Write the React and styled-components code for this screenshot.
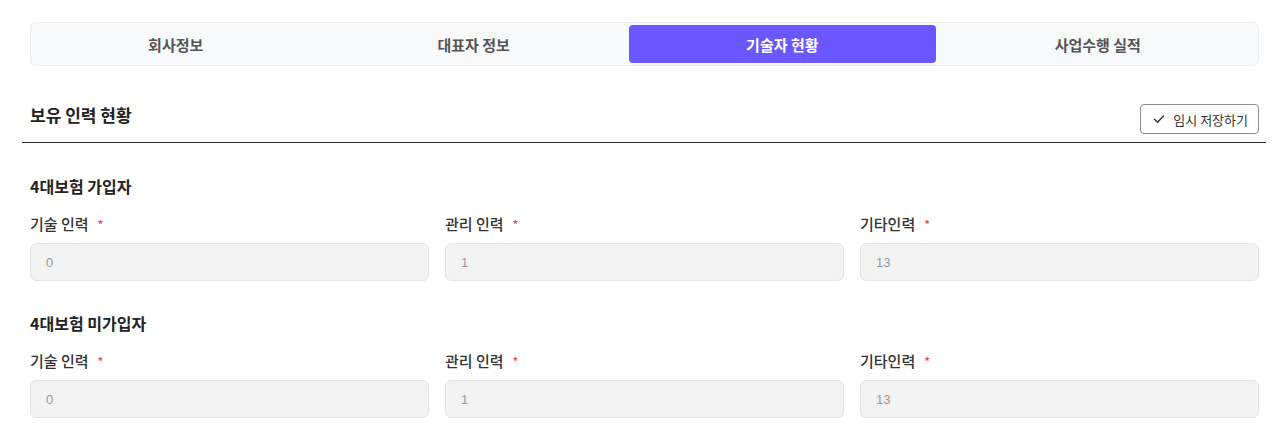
import React from 'react';
import styled, { createGlobalStyle } from 'styled-components';

const GlobalStyle = createGlobalStyle`
  body {
    margin: 0;
    background: #fff;
    font-family: "Noto Sans CJK KR", "Noto Sans", sans-serif;
    color: #222;
  }
`;

const Page = styled.div`
  padding: 22px 14px 0 22px;
`;

const TabBar = styled.div`
  display: flex;
  margin: 0 7px 0 8px;
  padding: 2px 0;
  height: 44px;
  box-sizing: border-box;
  background: #f8f9fa;
  border: 1px solid #eceef0;
  border-radius: 6px;
`;

const Tab = styled.button`
  flex: 1 1 auto;
  border: 0;
  border-radius: 4px;
  margin: 0 ${p => (p.$active ? '2px' : '0')};
  background: ${p => (p.$active ? '#6b57ff' : 'transparent')};
  color: ${p => (p.$active ? '#fff' : '#555')};
  font-family: inherit;
  font-size: 15px;
  font-weight: 700;
  cursor: pointer;
  padding: 0;
`;

const Header = styled.div`
  display: flex;
  align-items: flex-end;
  justify-content: space-between;
  margin-top: 38px;
  padding: 0 8px 8px 8px;
  border-bottom: 1px solid #2b2f36;
`;

const Title = styled.h2`
  margin: 0 0 8px;
  font-size: 17px;
  line-height: 22px;
  font-weight: 700;
  color: #222;
`;

const SaveButton = styled.button`
  display: flex;
  align-items: center;
  gap: 8px;
  height: 30px;
  padding: 0 10px 0 12px;
  border: 1px solid #8a8d93;
  border-radius: 4px;
  background: #fff;
  font-family: inherit;
  font-size: 13px;
  color: #333;
  margin-right: -1px;
`;

const Section = styled.section`
  padding: ${p => p.$top}px 8px 0 8px;
`;

const SectionTitle = styled.h3`
  margin: 0 0 16px;
  font-size: 16px;
  line-height: 24px;
  font-weight: 700;
  color: #222;
`;

const Grid = styled.div`
  display: grid;
  grid-template-columns: repeat(3, 1fr);
  gap: 16px;
  margin-right: -1px;
`;

const Field = styled.div`
  display: flex;
  flex-direction: column;
  gap: 9px;
`;

const Label = styled.label`
  font-size: 15px;
  line-height: 20px;
  color: #333;
  font-weight: 500;
`;

const Required = styled.span`
  color: #e5484d;
  margin-left: 9px;
  font-size: 12px;
  vertical-align: 1px;
`;

const Input = styled.input`
  height: 38px;
  box-sizing: border-box;
  padding: 0 15px;
  background: #f3f3f3;
  border: 1px solid #e4e4e4;
  border-radius: 6px;
  font-family: "Liberation Sans", Arial, sans-serif;
  font-size: 13px;
  color: #999;
  outline: none;
`;

const tabs = ['회사정보', '대표자 정보', '기술자 현황', '사업수행 실적'];

const groups = [
  { title: '4대보험 가입자', top: 31, values: ['0', '1', '13'] },
  { title: '4대보험 미가입자', top: 30, values: ['0', '1', '13'] },
];

const labels = ['기술 인력', '관리 인력', '기타인력'];

const CheckIcon = () => (
  <svg width="12" height="12" viewBox="0 0 12 12" fill="none">
    <path d="M1.5 6.2 L4.6 9.2 L10.5 3" stroke="#333" strokeWidth="1.4" strokeLinecap="round" strokeLinejoin="round" />
  </svg>
);

export default function App() {
  return (
    <Page>
      <GlobalStyle />
      <TabBar>
        {tabs.map((t, i) => (
          <Tab key={t} $active={i === 2}>{t}</Tab>
        ))}
      </TabBar>
      <Header>
        <Title>보유 인력 현황</Title>
        <SaveButton>
          <CheckIcon />
          임시 저장하기
        </SaveButton>
      </Header>
      {groups.map(g => (
        <Section key={g.title} $top={g.top}>
          <SectionTitle>{g.title}</SectionTitle>
          <Grid>
            {labels.map((l, i) => (
              <Field key={l}>
                <Label>
                  {l}
                  <Required>*</Required>
                </Label>
                <Input readOnly value={g.values[i]} />
              </Field>
            ))}
          </Grid>
        </Section>
      ))}
    </Page>
  );
}
